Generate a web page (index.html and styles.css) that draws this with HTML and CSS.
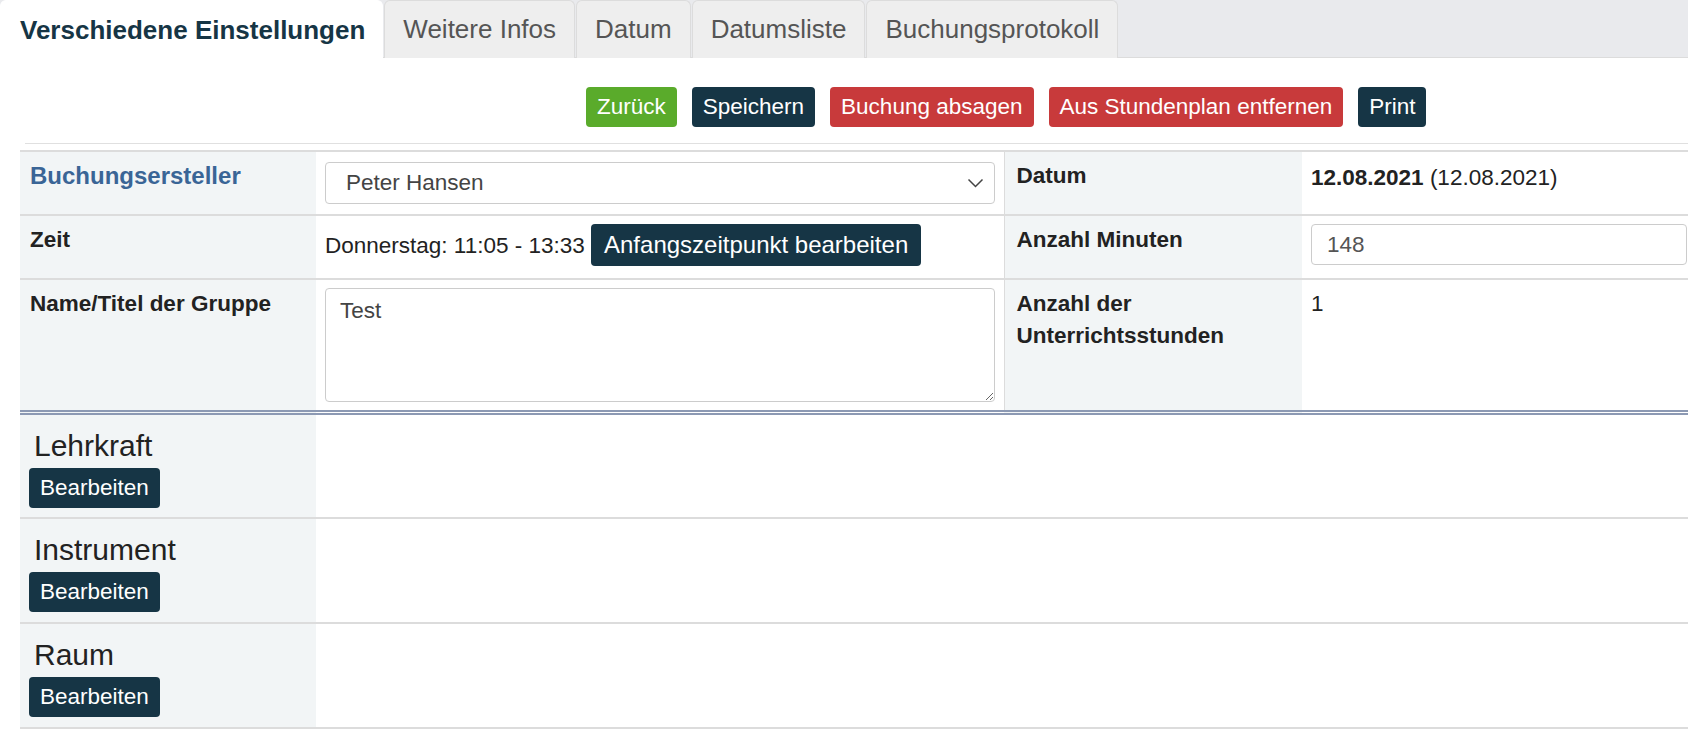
FILE: index.html
```html
<!DOCTYPE html>
<html lang="de">
<head>
  <meta charset="UTF-8">
  <title>Buchung bearbeiten</title>
  <link rel="stylesheet" href="styles.css">
</head>
<body>
  <!-- Reiter oben -->
  <div class="tabs">
    <a class="tab active">Verschiedene Einstellungen</a>
    <a class="tab">Weitere Infos</a>
    <a class="tab">Datum</a>
    <a class="tab">Datumsliste</a>
    <a class="tab">Buchungsprotokoll</a>
  </div>

  <div class="page">
    <div class="actions">
      <button class="btn green">Zurück</button>
      <button class="btn dark">Speichern</button>
      <button class="btn red">Buchung absagen</button>
      <button class="btn red">Aus Stundenplan entfernen</button>
      <button class="btn dark">Print</button>
    </div>
    <hr class="sep">

    <table class="details">
      <colgroup>
        <col class="c-label1"><col class="c-value1"><col class="c-label2"><col class="c-value2">
      </colgroup>
      <tr class="r1">
        <th class="creator">Buchungsersteller</th>
        <td>
          <div class="select">
            <span>Peter Hansen</span>
            <svg width="17" height="10" viewBox="0 0 17 10"><path d="M1.5 1.5 L8.5 8.5 L15.5 1.5" fill="none" stroke="#444" stroke-width="1.5"/></svg>
          </div>
        </td>
        <th class="split">Datum</th>
        <td><b>12.08.2021</b> (12.08.2021)</td>
      </tr>
      <tr class="r2">
        <th>Zeit</th>
        <td>Donnerstag: 11:05 - 13:33 <button class="btn dark big">Anfangszeitpunkt bearbeiten</button></td>
        <th class="split">Anzahl Minuten</th>
        <td><div class="input">148</div></td>
      </tr>
      <tr class="r3">
        <th>Name/Titel der Gruppe</th>
        <td><textarea class="area">Test</textarea></td>
        <th class="split">Anzahl der Unterrichtsstunden</th>
        <td>1</td>
      </tr>
    </table>

    <table class="assign">
      <tr class="first">
        <th><h4>Lehrkraft</h4><button class="btn dark">Bearbeiten</button></th>
        <td></td>
      </tr>
      <tr>
        <th><h4>Instrument</h4><button class="btn dark">Bearbeiten</button></th>
        <td></td>
      </tr>
      <tr>
        <th><h4>Raum</h4><button class="btn dark">Bearbeiten</button></th>
        <td></td>
      </tr>
    </table>
  </div>
</body>
</html>
```

FILE: styles.css
```css
* { margin: 0; padding: 0; box-sizing: border-box; }
html, body {
  background: #fff;
  overflow: hidden;
}
body {
  font-family: "Liberation Sans", Arial, sans-serif;
  font-size: 22.5px;
  color: #222;
}

/* Reiter */
.tabs {
  display: flex;
  height: 58px;
  background: #e9eaed;
  border-bottom: 1px solid #dcdcdc;
}
.tab {
  display: flex;
  align-items: center;
  padding: 0 18px;
  height: 58px;
  font-size: 26px;
  color: #555;
  background: #eee;
  border: 1px solid #dcdcdc;
  border-bottom: none;
  border-radius: 6px 6px 0 0;
  margin-right: 1px;
}
.tab.active {
  background: #fff;
  color: #163545;
  font-weight: bold;
  border-color: #fff;
  padding: 0 17px 0 19px;
  height: 59px;
}

.page {
  margin-left: 20px;
  width: 1720px;
}

/* Knöpfe */
.btn {
  font-family: inherit;
  font-size: 22.5px;
  color: #fff;
  border: none;
  border-radius: 4px;
  height: 40px;
  padding: 0 11px;
  cursor: pointer;
}
.btn.green { background: #5aab2b; }
.btn.dark  { background: #163545; }
.btn.red   { background: #c83a3b; }
.btn.big {
  font-size: 24px;
  height: 42px;
  padding: 0 13px;
}

.actions {
  display: flex;
  gap: 15px;
  padding: 29px 0 0 566px;
  height: 69px;
}
.sep {
  border: none;
  border-top: 1px solid #e0e0e0;
  margin: 16px 0 0 5px;
}

/* Tabelle oben */
table {
  border-collapse: collapse;
  width: 1720px;
  table-layout: fixed;
}
.c-label1 { width: 296px; }
.c-value1 { width: 688px; }
.c-label2 { width: 298px; }
.c-value2 { width: 438px; }

.details {
  margin-top: 6px;
  border-top: 2px solid #dcdcdc;
}
.details th, .details td {
  vertical-align: top;
  text-align: left;
  line-height: 32px;
  border-bottom: 2px solid #dcdcdc;
}
.details th {
  background: #f2f5f6;
  font-weight: bold;
  padding: 8px 10px;
}
.details td {
  padding: 8px 9px;
}
.details th.split {
  border-left: 1px solid #dcdcdc;
  padding-left: 12px;
}
.details th.creator {
  color: #3a6596;
  font-size: 24px;
}
.details .r1 th, .details .r1 td { height: 64px; }
.details .r2 th, .details .r2 td { height: 64px; }
.details .r3 th, .details .r3 td {
  height: 132px;
  border-bottom: 5px double #8c99b3;
}
.details .r1 td { padding-top: 10px; }
.details .r3 td { padding-top: 8px; }

.select {
  display: flex;
  justify-content: space-between;
  align-items: center;
  height: 42px;
  padding: 0 10px 0 20px;
  border: 1px solid #ccc;
  border-radius: 4px;
  color: #444;
}
.input {
  height: 41px;
  line-height: 39px;
  padding: 0 15px;
  border: 1px solid #ccc;
  border-radius: 4px;
  color: #555;
  width: 376px;
}
.area {
  display: block;
  width: 100%;
  height: 114px;
  font-family: inherit;
  font-size: 22.5px;
  color: #444;
  padding: 9px 14px;
  border: 1px solid #ccc;
  border-radius: 4px;
  resize: vertical;
}

/* Zuordnungen */
.assign th, .assign td {
  border-bottom: 2px solid #dcdcdc;
  height: 105px;
  vertical-align: top;
  text-align: left;
}
.assign .first th, .assign .first td { height: 103px; }
.assign th {
  width: 296px;
  background: #f2f5f6;
  font-weight: normal;
  padding: 15px 10px 0 9px;
}
.assign h4 {
  font-size: 30px;
  font-weight: normal;
  line-height: 32px;
  margin: 0 0 6px 5px;
}
```
